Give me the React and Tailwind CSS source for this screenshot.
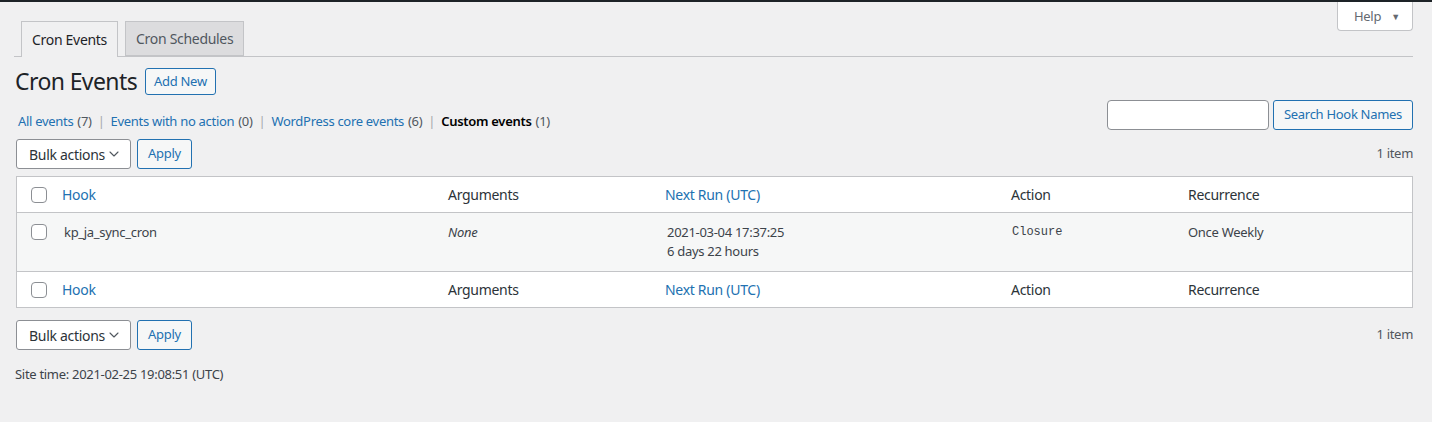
import { ChevronDown } from "lucide-react";

const font = { fontFamily: '"Noto Sans", "Open Sans", sans-serif' };

const views = [
  { label: "All events", count: 7 },
  { label: "Events with no action", count: 0 },
  { label: "WordPress core events", count: 6 },
  { label: "Custom events", count: 1, current: true },
];

const cols = "grid grid-cols-[35px_386px_217px_346px_177px_1fr]";

function Checkbox() {
  return <span className="block h-4 w-4 rounded-[4px] border border-[#8c8f94] bg-white" />;
}

function BulkBar() {
  return (
    <div className="flex items-center justify-between">
      <div className="flex items-center gap-[6px]">
        <div className="flex h-[30px] w-[115px] items-center justify-between whitespace-nowrap rounded-[3px] border border-[#8c8f94] bg-white pl-[12px] pr-[8px] text-[14px] text-[#2c3338]">
          <span>Bulk actions</span>
          <ChevronDown className="h-4 w-4 shrink-0 text-[#50575e]" strokeWidth={1.6} />
        </div>
        <button className="h-[30px] rounded-[3px] border border-[#2271b1] bg-[#f6f7f7] px-[10px] text-[13px] text-[#2271b1]">
          Apply
        </button>
      </div>
      <span className="text-[13px] text-[#50575e]">1 item</span>
    </div>
  );
}

function HeadRow({ top }) {
  return (
    <div className={`${cols} h-[36px] items-center text-[14px] text-[#2c3338] ${top ? "border-b" : "border-t"} border-[#c3c4c7]`}>
      <div className="pl-[14px]">
        <Checkbox />
      </div>
      <div className="pl-[10px] text-[#2271b1]">Hook</div>
      <div className="pl-[10px]">Arguments</div>
      <div className="pl-[10px] text-[#2271b1]">Next Run (UTC)</div>
      <div className="pl-[10px]">Action</div>
      <div className="pl-[10px]">Recurrence</div>
    </div>
  );
}

export default function App() {
  return (
    <div className="min-h-[422px] w-full bg-[#f0f0f1] tracking-[-0.3px] text-[#3c434a]" style={font}>
      <div className="h-[2px] bg-[#1d2327]" />

      <div className="pl-[14px] pr-[19px]">
        {/* Tabs + help */}
        <div className="flex items-start justify-between border-b border-[#c3c4c7]">
          <div className="-mb-px flex gap-[7px] pl-[7px] pt-[19px]">
            <div className="flex h-[36px] items-center border border-b-0 border-[#c3c4c7] bg-[#f0f0f1] px-[10px] text-[14px] text-[#1d2327]">
              Cron Events
            </div>
            <div className="flex h-[35px] items-center border border-[#c3c4c7] bg-[#dcdcde] px-[10px] text-[14px] text-[#50575e]">
              Cron Schedules
            </div>
          </div>
          <div className="flex h-[29px] w-[76px] items-center gap-[10px] rounded-b-[4px] border border-t-0 border-[#c3c4c7] bg-white pl-[16px] pt-[2px] text-[13px] text-[#646970]">
            <span>Help</span>
            <span className="text-[9px]">▼</span>
          </div>
        </div>

        <div className="pl-[1px]">
          {/* Heading */}
          <div className="mt-[10px] flex h-[29px] items-center gap-[8px]">
            <h1 className="text-[23px] leading-[29px] tracking-[-0.6px] text-[#1d2327]">Cron Events</h1>
            <button className="h-[27px] rounded-[3px] border border-[#2271b1] bg-[#f6f7f7] px-[8px] text-[13px] text-[#2271b1]">
              Add New
            </button>
          </div>

          {/* Views + search */}
          <div className="mt-[4px] flex items-end justify-between">
            <ul className="flex items-center pl-[3px] text-[13px] leading-[18px]">
              {views.map((v, i) => (
                <li key={v.label} className="flex items-center">
                  <span className={v.current ? "font-semibold text-black" : "text-[#2271b1]"}>{v.label}</span>
                  <span className="ml-[4px] text-[#50575e]">({v.count})</span>
                  {i < views.length - 1 && <span className="mx-[6px] text-[#a7aaad]">|</span>}
                </li>
              ))}
            </ul>
            <div className="flex items-center gap-[4px]">
              <div className="h-[30px] w-[162px] rounded-[4px] border border-[#8c8f94] bg-white" />
              <button className="h-[30px] rounded-[3px] border border-[#2271b1] bg-[#f6f7f7] px-[10px] text-[13px] text-[#2271b1]">
                Search Hook Names
              </button>
            </div>
          </div>

          <div className="ml-[1px] mt-[9px]">
            <BulkBar />
          </div>

          {/* Table */}
          <div className="ml-[1px] mt-[7px] border border-[#c3c4c7] bg-white">
            <HeadRow top />
            <div className={`${cols} h-[58px] bg-[#f6f7f7] pt-[10px] text-[13px] text-[#3c434a]`}>
              <div className="pl-[14px] pt-[1px]">
                <Checkbox />
              </div>
              <div className="pl-[12px]">kp_ja_sync_cron</div>
              <div className="pl-[10px] italic">None</div>
              <div className="pl-[12px] leading-[19px]">
                <div>2021-03-04 17:37:25</div>
                <div>6 days 22 hours</div>
              </div>
              <div className="pl-[11px] text-[12px] tracking-normal" style={{ fontFamily: '"Liberation Mono", monospace' }}>
                Closure
              </div>
              <div className="pl-[10px]">Once Weekly</div>
            </div>
            <HeadRow />
          </div>

          <div className="ml-[1px] mt-[12px]">
            <BulkBar />
          </div>

          <p className="mt-[15px] text-[13px] leading-[18px] text-[#3c434a]">Site time: 2021-02-25 19:08:51 (UTC)</p>
        </div>
      </div>
    </div>
  );
}
